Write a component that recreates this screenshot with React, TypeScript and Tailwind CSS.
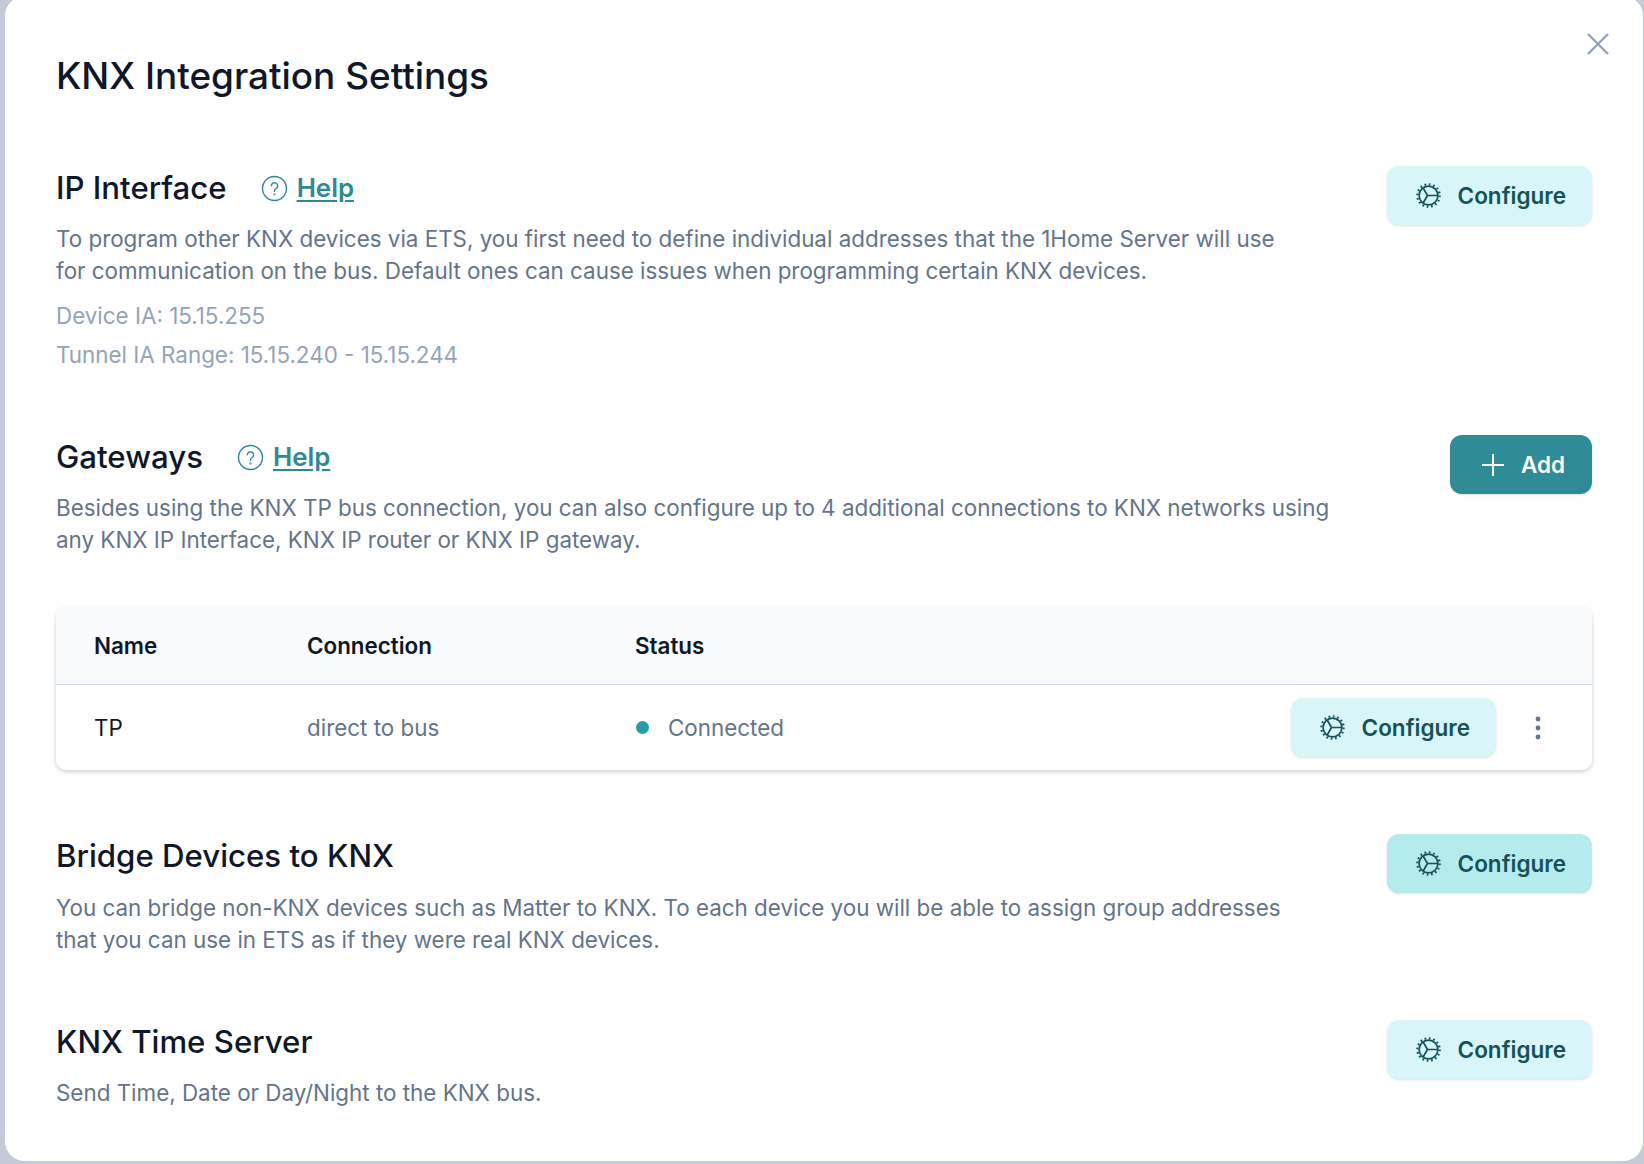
import React from 'react';

const GearIcon = () => (
  <svg width="25" height="25" viewBox="0 0 25 25" fill="none" stroke="currentColor" className="shrink-0">
    <circle cx="12.5" cy="12.5" r="9.4" strokeWidth="1.7" />
    <circle cx="12.5" cy="12.5" r="11.2" strokeWidth="2.2" strokeDasharray="1.7 2.7" />
    <path d="M11.5 12.5H21.5M11.5 12.5L7 4.8M11.5 12.5L7 20.2" strokeWidth="1.7" />
  </svg>
);

const HelpLink = () => (
  <div className="flex items-center gap-[9px] text-[#2d8a94]">
    <svg width="27" height="27" viewBox="0 0 27 27" fill="none" stroke="currentColor" strokeWidth="1.4" strokeLinecap="round">
      <circle cx="13.5" cy="13.5" r="12" />
      <path d="M10.4 10.8a3.1 3.1 0 1 1 4.7 2.7c-1 .6-1.6 1.2-1.6 2.4v.5" />
      <circle cx="13.5" cy="19.4" r="0.4" />
    </svg>
    <a href="#" className="text-[25.8px] leading-[44px] font-semibold underline underline-offset-[3px]">Help</a>
  </div>
);

const ConfigureButton = ({ active }: { active?: boolean }) => (
  <button
    className={
      'flex items-center gap-[17px] h-[59px] pl-[29px] pr-[26px] rounded-[12px] text-[#14525a] text-[22.5px] font-semibold shadow-sm shrink-0 ' +
      (active ? 'bg-[#b6ebed]' : 'bg-[#d8f5f7]')
    }
  >
    <GearIcon />
    Configure
  </button>
);

const AddButton = () => (
  <button className="flex items-center gap-[17px] h-[59px] pl-[32px] pr-[27px] rounded-[12px] bg-[#2f8b95] text-white text-[22.5px] font-semibold shadow-sm shrink-0">
    <svg width="22" height="22" viewBox="0 0 22 22" fill="none" stroke="currentColor" strokeWidth="2">
      <path d="M11 0V22M0 11H22" />
    </svg>
    Add
  </button>
);

const Heading = ({ children }: { children: React.ReactNode }) => (
  <h2 className="text-[31.2px] leading-[44px] font-medium text-[#0f172a]">{children}</h2>
);

const Body = ({ children, className = 'mt-[13px]' }: { children: React.ReactNode; className?: string }) => (
  <p className={'text-[22.4px] leading-[32px] text-[#64748b] ' + className}>{children}</p>
);

export default function App() {
  return (
    <div className="w-[1644px] h-[1164px] overflow-hidden bg-[#c4cbd6] pl-[5px] pr-px pb-[3px] font-['Inter',sans-serif]">
      <div className="relative -mt-[4px] h-[1165px] rounded-[20px] bg-white pt-[58px] pl-[51px] pr-[51px]">
        <button className="absolute right-[34px] top-[37px] text-[#94a3b8]">
          <svg width="22" height="22" viewBox="0 0 22 22" fill="none" stroke="currentColor" strokeWidth="2.4">
            <path d="M1 1L21 21M21 1L1 21" />
          </svg>
        </button>

        <h1 className="text-[36.9px] leading-[44px] font-medium text-[#0f172a]">KNX Integration Settings</h1>

        <section className="mt-[68px] flex items-start gap-24">
          <div className="flex-1">
            <div className="flex items-center gap-[34px]">
              <Heading>IP Interface</Heading>
              <HelpLink />
            </div>
            <Body>
              To program other KNX devices via ETS, you first need to define individual addresses that the 1Home Server will use for communication on the bus. Default ones can cause issues when programming certain KNX devices.
            </Body>
            <p className="mt-[13px] text-[22.4px] leading-[32px] text-[#94a3b8]">Device IA: 15.15.255</p>
            <p className="mt-[7px] text-[22.4px] leading-[32px] text-[#94a3b8]">Tunnel IA Range: 15.15.240 - 15.15.244</p>
          </div>
          <ConfigureButton />
        </section>

        <section className="mt-[64px] flex items-start gap-24">
          <div className="flex-1">
            <div className="flex items-center gap-[34px]">
              <Heading>Gateways</Heading>
              <HelpLink />
            </div>
            <Body>
              Besides using the KNX TP bus connection, you can also configure up to 4 additional connections to KNX networks using any KNX IP Interface, KNX IP router or KNX IP gateway.
            </Body>
          </div>
          <AddButton />
        </section>

        <div className="mt-[51px] rounded-[10px] bg-white shadow-[0_2px_4px_rgba(15,23,42,0.2)] overflow-hidden">
          <div className="grid grid-cols-[213px_328px_1fr] items-center h-[78px] pl-[38px] bg-[#f8fafc] border-b border-[#cbd5e1] text-[22.4px] font-semibold text-[#0f172a]">
            <div>Name</div>
            <div>Connection</div>
            <div>Status</div>
          </div>
          <div className="grid grid-cols-[213px_328px_1fr] items-center h-[85px] pl-[38px] text-[22.4px]">
            <div className="text-[#0f172a]">TP</div>
            <div className="text-[#64748b]">direct to bus</div>
            <div className="flex items-center">
              <span className="w-[13px] h-[13px] rounded-full bg-[#1f9fa8] ml-[1px] mr-[19px]" />
              <span className="text-[#64748b]">Connected</span>
              <div className="ml-auto flex items-center">
                <ConfigureButton />
                <svg width="6" height="24" viewBox="0 0 6 24" className="ml-[39px] mr-[51px] text-[#64748b]" fill="currentColor">
                  <circle cx="3" cy="3" r="2.4" />
                  <circle cx="3" cy="12" r="2.4" />
                  <circle cx="3" cy="21" r="2.4" />
                </svg>
              </div>
            </div>
          </div>
        </div>

        <section className="mt-[64px] flex items-start gap-24">
          <div className="flex-1">
            <Heading>Bridge Devices to KNX</Heading>
            <Body className="mt-[14px]">
              You can bridge non-KNX devices such as Matter to KNX. To each device you will be able to assign group addresses that you can use in ETS as if they were real KNX devices.
            </Body>
          </div>
          <ConfigureButton active />
        </section>

        <section className="mt-[64px] flex items-start gap-24">
          <div className="flex-1">
            <Heading>KNX Time Server</Heading>
            <Body>Send Time, Date or Day/Night to the KNX bus.</Body>
          </div>
          <ConfigureButton />
        </section>
      </div>
    </div>
  );
}
